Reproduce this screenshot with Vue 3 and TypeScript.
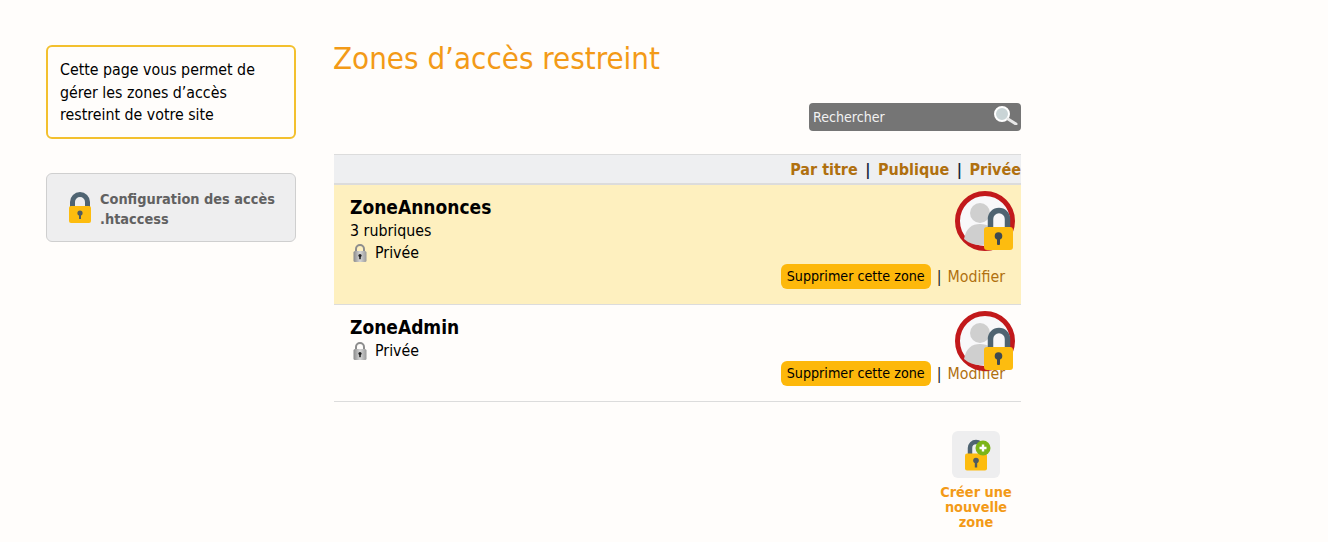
<script setup lang="ts">
interface Zone { name: string; rubriques?: string; selected: boolean }
const zones: Zone[] = [
  { name: 'ZoneAnnonces', rubriques: '3 rubriques', selected: true },
  { name: 'ZoneAdmin', selected: false },
]
</script>

<template>
  <div class="page">
    <aside class="side">
      <div class="info">Cette page vous permet de gérer les zones d’accès restreint de votre site</div>
      <a class="config">
        <svg class="config-lock" viewBox="0 0 24 32" width="24" height="32">
          <path d="M4.500 15V10a7.500 7.500 0 0 1 15 0v5" fill="none" stroke="#4f6472" stroke-width="5" />
          <rect x="1" y="14" width="22" height="17" rx="2" fill="#fdbc0f" />
          <circle cx="12" cy="21" r="2.600" fill="#4f5a60" />
          <rect x="11" y="22" width="2" height="5" fill="#4f5a60" />
        </svg>
        <span>Configuration des accès .htaccess</span>
      </a>
    </aside>

    <main class="main">
      <h1 class="title">Zones d’accès restreint</h1>
      <div class="search-row">
        <div class="search">
          <span>Rechercher</span>
          <svg viewBox="0 0 25 20" width="25" height="20">
            <circle cx="9" cy="9" r="7" fill="#c9d4d6" stroke="#fff" stroke-width="2" />
            <path d="M15 14l8 5" stroke="#e8e8e8" stroke-width="3" stroke-linecap="round" />
          </svg>
        </div>
      </div>
      <div class="sort">
        <a>Par titre</a><i>|</i><a>Publique</a><i>|</i><a>Privée</a>
      </div>
      <div v-for="z in zones" :key="z.name" class="zone" :class="{ selected: z.selected }">
        <div class="zone-name">{{ z.name }}</div>
        <div v-if="z.rubriques" class="line">{{ z.rubriques }}</div>
        <div class="line priv">
          <svg viewBox="0 0 16 20" width="16" height="20">
            <defs>
              <linearGradient :id="'g' + z.name" x1="0" x2="1" y1="0" y2="0">
                <stop offset="0" stop-color="#8a8a8a" />
                <stop offset="0.5" stop-color="#d6d6d6" />
                <stop offset="1" stop-color="#9a9a9a" />
              </linearGradient>
            </defs>
            <path d="M4 9V6a4 4 0 0 1 8 0v3" fill="none" stroke="#8d8d8d" stroke-width="2" />
            <rect x="1.500" y="8" width="13" height="11" rx="1.500" :fill="'url(#g' + z.name + ')'" />
            <circle cx="8" cy="12.500" r="1.600" fill="#222" />
            <rect x="7.200" y="13" width="1.600" height="3.200" fill="#222" />
          </svg>
          <span>Privée</span>
        </div>
        <div class="actions">
          <a class="del">Supprimer cette zone</a>
          <i>|</i>
          <a class="edit">Modifier</a>
        </div>
        <svg class="badge" viewBox="0 0 60 60" width="60" height="60">
          <circle cx="30" cy="30" r="27.500" fill="#f8f8fa" stroke="#c2191b" stroke-width="5" />
          <circle cx="25" cy="22" r="10" fill="#cfcfcf" />
          <path d="M9 48c2-11 8-15 16-15s14 4 16 15a24 24 0 0 1-32 0z" fill="#cfcfcf" />
          <path d="M35.500 38V28a8.500 8.500 0 0 1 17 0v10" fill="none" stroke="#4f6472" stroke-width="5.500" />
          <rect x="29" y="36" width="29" height="23" rx="3" fill="#fdbc0f" />
          <circle cx="43.500" cy="45" r="3.800" fill="#3f4a50" />
          <rect x="42" y="46" width="3" height="8" rx="1" fill="#3f4a50" />
        </svg>
      </div>
      <div class="create-row">
        <a class="create">
          <span class="create-icon">
            <svg viewBox="0 0 32 34" width="32" height="34">
              <path d="M10 17V10a6 6 0 0 1 12 0v7" fill="none" stroke="#4f6472" stroke-width="4.500" />
              <rect x="5" y="15.500" width="22" height="17" rx="2" fill="#fdbc0f" />
              <circle cx="16" cy="22.500" r="2.800" fill="#4f5a60" />
              <rect x="14.800" y="23.500" width="2.400" height="6" fill="#4f5a60" />
              <circle cx="23" cy="10" r="7.500" fill="#7cb518" />
              <path d="M23 6.500v7M19.500 10h7" stroke="#fff" stroke-width="2.400" />
            </svg>
          </span>
          <span class="create-label">Créer une nouvelle zone</span>
        </a>
      </div>
    </main>
  </div>
</template>

<style scoped>
.page {
  display: flex;
  align-items: flex-start;
  gap: 38px;
  padding: 0 0 0 46px;
  height: 542px;
  box-sizing: border-box;
  overflow: hidden;
  background: #fffdfb;
  color: #000;
  font-family: "DejaVu Sans Condensed", "DejaVu Sans", sans-serif;
  font-size: 15.800px;
}
.side {
  width: 250px;
  padding-top: 45px;
  flex: none;
}
.info {
  box-sizing: border-box;
  height: 94px;
  border: 2px solid #f3c02e;
  border-radius: 6px;
  padding: 12px 12px;
  line-height: 22.500px;
  background: #fffdfb;
}
.config {
  box-sizing: border-box;
  margin-top: 34px;
  height: 69px;
  display: flex;
  align-items: center;
  gap: 8px;
  padding: 2px 12px 0 21px;
  background: #eeeeef;
  border: 1px solid #cfcfcf;
  border-radius: 6px;
  color: #616161;
  font-weight: 700;
  font-size: 14.400px;
  line-height: 20px;
}
.config-lock { flex: none; margin-top: -1px; }
.main {
  width: 687px;
  flex: none;
}
.title {
  margin: 0 0 0 -1px;
  padding-top: 36px;
  height: 67px;
  box-sizing: content-box;
  font-weight: 400;
  font-size: 31px;
  line-height: 44px;
  color: #f39a17;
}
.search-row {
  display: flex;
  justify-content: flex-end;
}
.search {
  box-sizing: border-box;
  width: 212px;
  height: 28px;
  display: flex;
  align-items: center;
  justify-content: space-between;
  padding: 0 3px 0 4px;
  background: #757575;
  border-radius: 4px;
  color: #f2f2f2;
  font-size: 14.100px;
}
.search svg { margin-top: -4px; }
.sort {
  box-sizing: border-box;
  margin-top: 23px;
  height: 31px;
  display: flex;
  justify-content: flex-end;
  align-items: center;
  gap: 7.500px;
  background: #eeeff1;
  border-top: 1px solid #dcdcdc;
  border-bottom: 2px solid #dcdcdc;
  font-weight: 700;
  font-size: 16px;
  color: #b0700f;
}
.sort i { font-style: normal; color: #14283c; }
.zone {
  position: relative;
  box-sizing: border-box;
  padding: 10px 16px 0;
  border-bottom: 1px solid #dcdcdc;
  height: 97px;
}
.zone.selected {
  background: #fef0bf;
  height: 120px;
}
.zone-name {
  font-weight: 700;
  font-size: 19px;
  line-height: 25px;
}
.line {
  line-height: 22px;
}
.priv {
  display: flex;
  align-items: center;
  gap: 7px;
}
.priv svg { margin-left: 2px; }
.actions {
  position: absolute;
  right: 16px;
  bottom: 15px;
  display: flex;
  align-items: center;
  gap: 6px;
}
.del {
  background: #fdb80b;
  border-radius: 6px;
  padding: 0 6px;
  height: 25px;
  line-height: 25px;
  font-size: 14.200px;
}
.actions i { font-style: normal; color: #222; }
.edit { color: #b0700f; }
.badge {
  position: absolute;
  top: 6px;
  right: 6px;
}
.create-row {
  display: flex;
  justify-content: flex-end;
  padding: 29px 5px 0 0;
}
.create {
  width: 80px;
  display: flex;
  flex-direction: column;
  align-items: center;
  gap: 7px;
}
.create-icon {
  width: 48px;
  height: 47px;
  background: #eeeeef;
  border-radius: 6px;
  display: flex;
  align-items: center;
  justify-content: center;
}
.create-label {
  text-align: center;
  font-weight: 700;
  font-size: 14.400px;
  line-height: 15px;
  color: #f39a17;
}
</style>
